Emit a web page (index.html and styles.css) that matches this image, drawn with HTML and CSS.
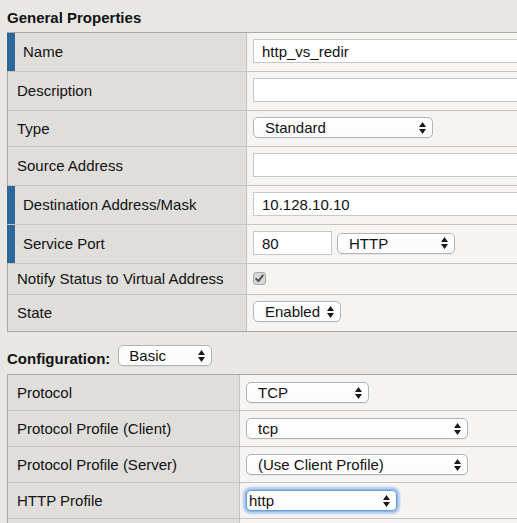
FILE: index.html
```html
<!DOCTYPE html>
<html>
<head>
<meta charset="utf-8">
<title>Virtual Server Properties</title>
<link rel="stylesheet" href="styles.css">
</head>
<body>
<div class="page">
  <h2 class="section-title">General Properties</h2>
  <div class="props props-general">
    <div class="row req">
      <div class="label">Name</div>
      <div class="value"><input class="text-input wide" type="text" value="http_vs_redir"></div>
    </div>
    <div class="row">
      <div class="label">Description</div>
      <div class="value"><input class="text-input wide" type="text" value=""></div>
    </div>
    <div class="row">
      <div class="label">Type</div>
      <div class="value">
        <div class="select w-standard"><span class="select-text">Standard</span><svg class="arrows" width="7" height="12" viewBox="0 0 7 12"><polygon points="0,5 3.5,0 7,5"/><polygon points="0,7 7,7 3.5,12"/></svg></div>
      </div>
    </div>
    <div class="row">
      <div class="label">Source Address</div>
      <div class="value"><input class="text-input wide" type="text" value=""></div>
    </div>
    <div class="row req">
      <div class="label">Destination Address/Mask</div>
      <div class="value"><input class="text-input wide" type="text" value="10.128.10.10"></div>
    </div>
    <div class="row req">
      <div class="label">Service Port</div>
      <div class="value port">
        <input class="text-input port-input" type="text" value="80">
        <div class="select w-http"><span class="select-text">HTTP</span><svg class="arrows" width="7" height="12" viewBox="0 0 7 12"><polygon points="0,5 3.5,0 7,5"/><polygon points="0,7 7,7 3.5,12"/></svg></div>
      </div>
    </div>
    <div class="row">
      <div class="label">Notify Status to Virtual Address</div>
      <div class="value check-cell">
        <svg class="checkbox" width="13" height="13" viewBox="0 0 13 13"><rect x="0.5" y="0.5" width="12" height="12" rx="2.5" fill="#d6d6d5" stroke="#a9a9a8"/><path d="M3.2 6.8 L5.4 9.2 L9.9 3.4" fill="none" stroke="#4f4f4f" stroke-width="1.9" stroke-linecap="round" stroke-linejoin="round"/></svg>
      </div>
    </div>
    <div class="row">
      <div class="label">State</div>
      <div class="value state-cell">
        <div class="select w-enabled"><span class="select-text">Enabled</span><svg class="arrows" width="7" height="12" viewBox="0 0 7 12"><polygon points="0,5 3.5,0 7,5"/><polygon points="0,7 7,7 3.5,12"/></svg></div>
      </div>
    </div>
  </div>

  <div class="config-head">
    <span class="section-title inline">Configuration:</span>
    <div class="select w-basic"><span class="select-text basic-text">Basic</span><svg class="arrows" width="7" height="12" viewBox="0 0 7 12"><polygon points="0,5 3.5,0 7,5"/><polygon points="0,7 7,7 3.5,12"/></svg></div>
  </div>

  <div class="props props-config">
    <div class="row">
      <div class="label">Protocol</div>
      <div class="value">
        <div class="select w-tcp"><span class="select-text">TCP</span><svg class="arrows" width="7" height="12" viewBox="0 0 7 12"><polygon points="0,5 3.5,0 7,5"/><polygon points="0,7 7,7 3.5,12"/></svg></div>
      </div>
    </div>
    <div class="row">
      <div class="label">Protocol Profile (Client)</div>
      <div class="value">
        <div class="select w-profile"><span class="select-text">tcp</span><svg class="arrows" width="7" height="12" viewBox="0 0 7 12"><polygon points="0,5 3.5,0 7,5"/><polygon points="0,7 7,7 3.5,12"/></svg></div>
      </div>
    </div>
    <div class="row">
      <div class="label">Protocol Profile (Server)</div>
      <div class="value">
        <div class="select w-profile"><span class="select-text">(Use Client Profile)</span><svg class="arrows" width="7" height="12" viewBox="0 0 7 12"><polygon points="0,5 3.5,0 7,5"/><polygon points="0,7 7,7 3.5,12"/></svg></div>
      </div>
    </div>
    <div class="row">
      <div class="label">HTTP Profile</div>
      <div class="value">
        <div class="select w-httpprof focused"><span class="select-text tight">http</span><svg class="arrows" width="7" height="12" viewBox="0 0 7 12"><polygon points="0,5 3.5,0 7,5"/><polygon points="0,7 7,7 3.5,12"/></svg></div>
      </div>
    </div>
    <div class="row">
      <div class="label">&nbsp;</div>
      <div class="value empty"></div>
    </div>
  </div>
</div>
</body>
</html>
```

FILE: styles.css
```css
html, body {
  margin: 0;
  padding: 0;
  background: #e8e7e4;
  overflow: hidden;
}

.page {
  width: 517px;
  height: 523px;
  overflow: hidden;
  padding: 9px 0 0 7px;
  box-sizing: border-box;
  font-family: "Liberation Sans", Arial, sans-serif;
  font-size: 15px;
  color: #111;
}

.section-title {
  margin: 0 0 6px 0;
  font-size: 15px;
  line-height: 17px;
  font-weight: bold;
  color: #111;
}

.section-title.inline {
  margin: 0 0 -1px 0;
}

.props {
  width: 640px;
  border: 1px solid #a9a8a4;
  border-right: none;
  display: flex;
  flex-direction: column;
}

.row {
  display: grid;
  grid-template-columns: 239px 1fr;
}

.props-config .row {
  grid-template-columns: 232px 1fr;
}

.row + .row {
  border-top: 1px solid #c6c5c1;
}

.label {
  background: #dfdedb;
  border-right: 1px solid #c2c1bd;
  padding: 0 0 1px 9px;
  display: flex;
  align-items: center;
  white-space: nowrap;
  line-height: 17px;
}

.row.req .label {
  box-shadow: inset 7px 0 0 #30679a;
  border-left: 1px solid #30679a;
  margin-left: -1px;
  padding-left: 15px;
}

.value {
  background: #f5f4f2;
  padding: 6px 6px 8px 6px;
  display: flex;
  align-items: center;
}

.value.port {
  gap: 5px;
}

.value.check-cell {
  padding: 8px 6px 9px 6px;
}

.value.state-cell {
  padding: 6px 6px 9px 6px;
}

.props-config .value {
  padding: 7px 6px 7px 6px;
}

.value.empty {
  height: 21px;
}

.text-input {
  -webkit-appearance: none;
  appearance: none;
  box-sizing: border-box;
  height: 24px;
  margin: 0;
  border: 1px solid #c8c8c6;
  border-radius: 0;
  background: #fff;
  font-family: "Liberation Sans", Arial, sans-serif;
  font-size: 15px;
  color: #111;
  padding: 0 8px;
  outline: none;
}

.text-input.wide {
  width: 330px;
}

.text-input.port-input {
  width: 79px;
}

.checkbox {
  display: block;
}

.select {
  box-sizing: border-box;
  height: 21px;
  border: 1px solid #b3b3b1;
  border-radius: 5px;
  background: linear-gradient(#ffffff, #fbfbfb);
  box-shadow: 0 1px 0 rgba(0, 0, 0, 0.04);
  display: flex;
  align-items: center;
  justify-content: space-between;
  padding: 0 6px 0 11px;
  white-space: nowrap;
  line-height: 17px;
  color: #111;
}

.select-text.basic-text {
  margin-left: -1px;
}

.select-text.tight {
  margin-left: -8px;
}

.arrows {
  display: block;
  fill: #1a1a1a;
  flex: none;
}

.w-standard { width: 180px; }
.w-http { width: 118px; }
.w-enabled { width: 88px; }
.w-basic { width: 94px; }
.w-tcp { width: 123px; }
.w-profile { width: 222px; }
.w-httpprof { width: 151px; }

.select.focused {
  border-color: #6a9fdc;
  box-shadow: 0 0 0 1px #8fb8ec, 0 0 2px 3px rgba(120, 170, 235, 0.55);
  padding-left: 10px;
}

.config-head {
  display: flex;
  align-items: flex-end;
  gap: 8px;
  margin-top: 13px;
  margin-bottom: 8px;
}
```
